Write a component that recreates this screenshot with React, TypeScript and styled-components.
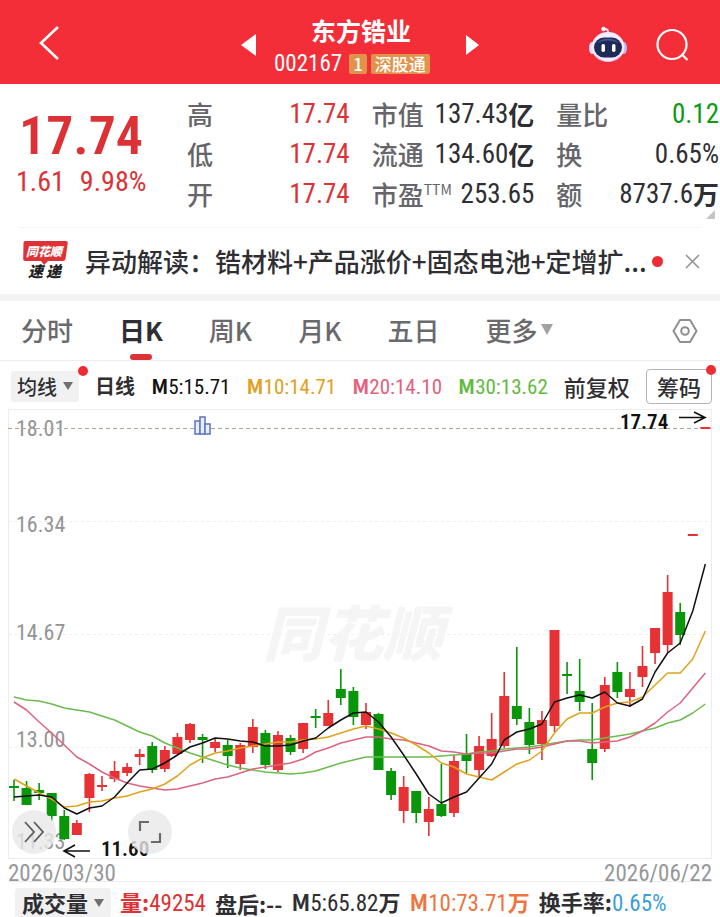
import React from "react";
import styled, { createGlobalStyle } from "styled-components";

const CJK = '"Noto Sans CJK SC", sans-serif';
const NUM = '"Roboto Condensed", "Liberation Sans Narrow", Roboto, "Noto Sans CJK SC", sans-serif';

const RED = "#dc3236";
const INK = "#2f2f33";

const GlobalStyle = createGlobalStyle`
  *, *::before, *::after { box-sizing: border-box; }
  body { margin: 0; background: #fff; color: ${INK}; font-family: ${CJK}; }
  button { border: 0; padding: 0; background: none; font: inherit; color: inherit; cursor: pointer; }
  h1, p, dl, dt, dd { margin: 0; font-weight: inherit; }
  svg { display: block; }
`;

const Page = styled.main`
  min-height: 100vh;
  overflow: hidden;
  background: #fff;
`;

const Num = styled.span<{ $size?: number; $weight?: number }>`
  font-family: ${NUM};
  font-size: ${(p) => (p.$size ? `${p.$size}px` : "inherit")};
  font-weight: ${(p) => p.$weight ?? 400};
`;

/* ---------- header ---------- */

const Header = styled.header`
  display: grid;
  grid-template-columns: 1fr auto 1fr;
  align-items: center;
  height: 84px;
  padding: 6px 30px 0;
  background: #f42e38;
  color: #fff;
`;

const BackButton = styled.button`
  margin-left: 8px;
`;

const Switcher = styled.div`
  display: flex;
  align-items: center;
  gap: 18px;
`;

const StockInfo = styled.div`
  min-width: 174px;
`;

const StockName = styled.h1`
  font-size: 25px;
  line-height: 38px;
  font-weight: 700;
  text-align: center;
`;

const CodeLine = styled.div`
  display: flex;
  align-items: center;
  gap: 4px;
  height: 30px;
`;

const Code = styled(Num)`
  margin-right: 3px;
  line-height: 30px;
`;

const Tag = styled.span`
  height: 20px;
  padding: 0 4px;
  border-radius: 2px;
  background: #e2934a;
  font-size: 17px;
  line-height: 20px;
  font-weight: 500;
`;

const HeaderActions = styled.div`
  display: flex;
  align-items: center;
  justify-content: flex-end;
  gap: 28px;
`;

/* ---------- quote ---------- */

const Quote = styled.section`
  position: relative;
  display: grid;
  grid-template-columns: 187px 1fr;
  height: 143px;
  padding: 10px 1px 0 0;
`;

const PriceBlock = styled.div`
  padding: 12px 0 0 16px;
  color: ${RED};
`;

const Price = styled(Num)`
  display: block;
  padding-left: 3px;
  line-height: 60px;
`;

const Change = styled(Num)`
  display: flex;
  gap: 15px;
  line-height: 32px;
`;

const Stats = styled.dl`
  display: grid;
  grid-template-columns: repeat(3, 1fr);
  grid-auto-flow: column;
  grid-template-rows: repeat(3, 40px);
  column-gap: 22px;
`;

const Stat = styled.div`
  display: flex;
  justify-content: space-between;
  align-items: center;
  white-space: nowrap;
`;

const StatLabel = styled.dt`
  display: flex;
  font-size: 26px;
  line-height: 40px;
  font-weight: 500;
  color: #66666a;
`;

const Sup = styled.sup`
  font-family: ${CJK};
  font-size: 14px;
  line-height: 30px;
  font-weight: 400;
`;

const StatValue = styled.dd<{ $color?: string }>`
  display: flex;
  align-items: center;
  font-size: 26px;
  line-height: 40px;
  font-weight: 700;
  color: ${(p) => p.$color ?? INK};
`;

const Corner = styled.span`
  position: absolute;
  right: 5px;
  bottom: 8px;
  border: solid transparent;
  border-width: 0 0 9px 9px;
  border-bottom-color: #c4c4c6;
`;

/* ---------- news ---------- */

const News = styled.section`
  display: flex;
  align-items: center;
  height: 67px;
  margin: 0 20px;
  border-top: 1px solid #f3f3f3;
`;

const NewsLink = styled.a`
  display: flex;
  align-items: center;
  flex: 1;
  min-width: 0;
  gap: 17px;
  color: ${INK};
  text-decoration: none;
`;

const Headline = styled.span`
  overflow: hidden;
  font-size: 26px;
  line-height: 40px;
  font-weight: 500;
  white-space: nowrap;
`;

const Dot = styled.i<{ $size: number }>`
  flex: none;
  width: ${(p) => p.$size}px;
  height: ${(p) => p.$size}px;
  border-radius: 50%;
  background: #ee2c35;
`;

const NewsDot = styled(Dot)`
  margin: 0 22px 0 4px;
`;

const CornerDot = styled(Dot)<{ $out?: number }>`
  position: absolute;
  top: -5px;
  right: ${(p) => -(p.$out ?? 5)}px;
`;

const Band = styled.div`
  height: 7px;
  background: #f3f3f4;
`;

/* ---------- tabs ---------- */

const Tabs = styled.nav`
  display: flex;
  align-items: stretch;
  gap: 46px;
  height: 60px;
  padding: 0 22px 0 21px;
  border-bottom: 1px solid #ececec;
`;

const Tab = styled.button<{ $active?: boolean }>`
  position: relative;
  display: flex;
  align-items: center;
  gap: 4px;
  padding-bottom: 2px;
  font-size: 26px;
  font-weight: ${(p) => (p.$active ? 700 : 500)};
  color: ${(p) => (p.$active ? INK : "#6a6a6d")};
  white-space: nowrap;

  &::after {
    content: "";
    display: ${(p) => (p.$active ? "block" : "none")};
    position: absolute;
    left: 50%;
    bottom: 0;
    width: 22px;
    height: 6px;
    margin-left: -11px;
    border-radius: 3px;
    background: ${RED};
  }
`;

const SettingsButton = styled.button`
  margin-left: auto;
`;

/* ---------- indicator rows ---------- */

const MaRow = styled.div`
  display: flex;
  align-items: center;
  justify-content: space-between;
  height: 48px;
  padding: 2px 8px 0 11px;
  white-space: nowrap;
`;

const Picker = styled.button`
  position: relative;
  display: flex;
  align-items: center;
  gap: 6px;
  height: 31px;
  padding: 0 6px;
  border-radius: 3px;
  background: #f1f1f2;
  font-size: 20px;
  font-weight: 500;
  line-height: 31px;
  color: ${INK};
`;

const VolumePicker = styled(Picker)`
  height: 30px;
  padding: 0 7px;
  font-size: 22px;
  font-weight: 700;
`;

const Item = styled.span<{ $color?: string; $size?: number; $weight?: number }>`
  font-size: ${(p) => p.$size ?? 20}px;
  line-height: 28px;
  font-weight: ${(p) => p.$weight ?? 700};
  color: ${(p) => p.$color ?? INK};
`;

const ChipButton = styled.button`
  position: relative;
  height: 35px;
  padding: 0 10px;
  border: 1px solid #b4b4b6;
  border-radius: 4px;
  font-size: 22px;
  line-height: 33px;
  font-weight: 500;
`;

const VolumeRow = styled.div`
  display: flex;
  align-items: center;
  gap: 9px;
  height: 36px;
  margin: 0 8px;
  padding: 6px 7px 0;
  border-top: 1px solid #ececf0;
  white-space: nowrap;
`;

/* ---------- chart ---------- */

const ChartBox = styled.div`
  position: relative;
  margin: 0 8px;
`;

const ChartSvg = styled.svg`
  width: 100%;
  height: auto;
`;

const FloatButton = styled.button<{ $left: number }>`
  position: absolute;
  left: ${(p) => p.$left}px;
  bottom: 5px;
  display: grid;
  place-items: center;
  width: 44px;
  height: 44px;
  border-radius: 50%;
  background: rgba(232, 232, 232, 0.8);
`;

const Dates = styled.div`
  display: flex;
  justify-content: space-between;
  height: 22px;
  margin: 0 8px;
  line-height: 30px;
  color: #97979a;
`;

type Candle = [up: 0 | 1, high: number, top: number, bottom: number, low: number];

const candles: Candle[] = [
  [0, 780, 786, 788, 801], [0, 781, 788, 805, 805], [0, 783, 790, 793, 800], [0, 793, 793, 816, 821],
  [0, 810, 816, 839, 840], [1, 820, 823, 835, 835], [1, 773, 774, 798, 812], [1, 776, 785, 787, 791],
  [1, 761, 771, 779, 782], [1, 763, 767, 773, 776], [1, 749, 754, 757, 765], [0, 742, 746, 770, 773],
  [1, 746, 750, 769, 772], [1, 733, 737, 754, 754], [1, 723, 724, 740, 743], [0, 734, 737, 740, 763],
  [1, 739, 742, 748, 752], [0, 740, 745, 756, 768], [1, 743, 745, 764, 770], [1, 719, 727, 747, 753],
  [0, 730, 733, 765, 769], [1, 731, 735, 770, 772], [0, 735, 738, 752, 755], [1, 723, 723, 749, 753],
  [0, 709, 716, 718, 728], [1, 700, 713, 726, 726], [0, 669, 689, 698, 705], [0, 687, 691, 717, 725],
  [1, 703, 712, 725, 729], [0, 713, 714, 770, 770], [0, 768, 771, 795, 800], [1, 776, 787, 811, 823],
  [0, 791, 791, 813, 823], [1, 797, 809, 822, 836], [0, 764, 804, 816, 817], [1, 755, 761, 813, 817],
  [0, 734, 754, 761, 773], [1, 736, 746, 770, 777], [1, 713, 739, 756, 757], [1, 672, 696, 746, 748],
  [0, 647, 706, 719, 725], [0, 708, 722, 745, 754], [1, 711, 720, 744, 760], [1, 630, 630, 726, 732],
  [0, 662, 674, 676, 694], [0, 659, 691, 702, 711], [0, 703, 749, 763, 780], [1, 677, 685, 749, 752],
  [0, 662, 672, 692, 698], [1, 672, 689, 697, 707], [1, 646, 666, 677, 687], [1, 628, 628, 653, 664],
  [1, 575, 592, 645, 653], [0, 603, 612, 635, 645], [1, 534, 534, 536, 536], [1, 427, 427, 429, 429],
];

const averages: { color: string; ys: number[] }[] = [
  {
    color: "#6cbb4e",
    ys: [697, 700, 701, 704, 708, 710, 712, 716, 720, 726, 732, 736, 743, 748, 753, 757, 761, 765, 768, 770, 772, 773, 774, 773, 771, 767, 763, 760, 757, 757, 757, 757, 757, 757, 756, 755, 754, 752, 751, 749, 748, 747, 745, 743, 741, 740, 740, 738, 736, 734, 731, 728, 723, 720, 713, 704],
  },
  {
    color: "#dd6480",
    ys: [702, 710, 722, 733, 745, 757, 764, 772, 778, 783, 786, 788, 790, 789, 786, 783, 779, 777, 773, 769, 767, 765, 763, 759, 752, 748, 743, 740, 737, 737, 739, 740, 743, 746, 751, 752, 754, 753, 753, 751, 749, 749, 747, 744, 741, 741, 743, 742, 741, 737, 731, 723, 712, 703, 688, 673],
  },
  {
    color: "#e0a21c",
    ys: [779, 786, 793, 799, 807, 806, 802, 801, 798, 796, 792, 789, 784, 776, 765, 758, 753, 751, 748, 746, 744, 742, 742, 740, 739, 737, 733, 729, 726, 729, 733, 738, 745, 753, 763, 767, 774, 777, 780, 772, 764, 760, 751, 733, 719, 713, 713, 707, 703, 702, 697, 685, 673, 673, 659, 631],
  },
  {
    color: "#111",
    ys: [797, 796, 795, 797, 808, 814, 808, 806, 797, 783, 770, 769, 763, 755, 747, 743, 738, 739, 741, 742, 746, 746, 745, 741, 738, 728, 720, 713, 712, 722, 737, 755, 774, 794, 803, 797, 792, 778, 764, 740, 732, 729, 724, 702, 698, 695, 698, 692, 703, 706, 699, 672, 653, 643, 611, 564],
  },
];

const FIRST_X = 14;
const STEP = 12.57;
const xAt = (i: number) => FIRST_X + i * STEP;

const axis = [
  { label: "18.01", y: 436 },
  { label: "16.34", y: 532 },
  { label: "14.67", y: 640 },
  { label: "13.00", y: 747 },
  { label: "11.33", y: 849 },
];

function CandleChart() {
  return (
    <ChartSvg viewBox="8 409 704 450" role="img" aria-label="日K">
      <g fill="none" stroke="#ececf0" strokeWidth="1">
        <rect x="8.5" y="409.5" width="703" height="449" />
        {[521, 634, 747].map((y) => (
          <path key={y} d={`M9 ${y}.5H711`} strokeDasharray="3 3" stroke="#eeeeee" />
        ))}
      </g>
      <text
        x="263" y="656" fontFamily={CJK} fontSize="60" fontWeight="900" fontStyle="italic" fill="#f5f5f5"
      >
        同花顺
      </text>
      <g fontFamily={NUM} fontSize="22" fill="#949497">
        {axis.map((a) => (
          <text key={a.label} x="16" y={a.y}>{a.label}</text>
        ))}
      </g>
      <path d="M8 428.5H711" stroke="#a9a98c" strokeWidth="1" strokeDasharray="4 3" />
      {candles.map(([up, high, top, bottom, low], i) => {
        const x = xAt(i);
        const color = up ? "#e63234" : "#0a960a";
        return (
          <g key={i} fill={color}>
            <rect x={x - 0.8} y={high} width="1.6" height={low - high} />
            <rect x={x - 5} y={top} width="10" height={bottom - top} />
          </g>
        );
      })}
      {averages.map((line) => (
        <polyline
          key={line.color}
          fill="none"
          stroke={line.color}
          strokeWidth="1.5"
          strokeLinejoin="round"
          points={line.ys.map((y, i) => `${xAt(i)},${y}`).join(" ")}
        />
      ))}
      <g fill="#e8edff" stroke="#6478c8" strokeWidth="1.6">
        <rect x="195" y="421" width="5" height="13" />
        <rect x="200" y="417" width="5" height="17" />
        <rect x="205" y="424" width="5" height="10" />
      </g>
      <g fontFamily={NUM} fontWeight="600" fontSize="21" fill="#111">
        <text x="620" y="429">17.74</text>
        <text x="101" y="856">11.60</text>
      </g>
      <g fill="none" stroke="#111" strokeWidth="1.6">
        <path d="M679 417.5H705M694 412L705 417.5L694 423" />
        <path d="M90 851H64M75 845L64 851L75 857" />
      </g>
    </ChartSvg>
  );
}

/* ---------- small drawings ---------- */

const Caret = ({ color = "#6f6f72", w = 10, h = 8 }: { color?: string; w?: number; h?: number }) => (
  <svg width={w} height={h} viewBox="0 0 10 8" preserveAspectRatio="none" aria-hidden>
    <path d="M0 0H10L5 8Z" fill={color} />
  </svg>
);

const Robot = () => (
  <svg width="40" height="38" viewBox="0 0 40 38" aria-hidden>
    <path d="M20 9V5.500Q20 3 15.500 2.800" fill="none" stroke="#f3dff2" strokeWidth="2" />
    <circle cx="15.500" cy="3" r="2.200" fill="#fff" />
    <ellipse cx="4" cy="22" rx="3" ry="6" fill="#e6ddfb" />
    <ellipse cx="36" cy="22" rx="3" ry="6" fill="#c9b4f2" />
    <ellipse cx="20" cy="21" rx="16.500" ry="15" fill="#f1ecff" />
    <path d="M7 29Q20 42 33 29Q28 36 20 36Q12 36 7 29Z" fill="#b9a0ec" />
    <rect x="6" y="11.500" width="28" height="20" rx="10" fill="#1f2b57" />
    <path d="M9 17Q13 12.500 20 12.500Q27 12.500 31 17Q26 14.500 20 14.500Q14 14.500 9 17Z" fill="#43538c" />
    <rect x="13.500" y="18" width="3.500" height="8" rx="1.700" fill="#fff" />
    <rect x="24" y="18" width="3.500" height="8" rx="1.700" fill="#fff" />
  </svg>
);

const NewsLogo = () => (
  <svg width="48" height="44" viewBox="0 0 48 44" role="img" aria-label="同花顺速递">
    <path d="M5 2H46Q48 2 47.700 4L45.500 20Q45 22 43 22H28L24 26L21 22H5Q3 22 3.200 20L3.500 4Q3.500 2 5 2Z" fill="#de3237" />
    <g fontFamily={CJK} fontWeight="900" fontStyle="italic">
      <text x="6" y="16.500" fontSize="12" fill="#fff">同花顺</text>
      <text x="8" y="38" fontSize="15" fill="#222">速</text>
      <text x="26" y="38" fontSize="15" fill="#222">递</text>
    </g>
  </svg>
);

/* ---------- data ---------- */

type StatData = { label: string; sup?: string; value: string; unit?: string; color?: string };

const stats: StatData[] = [
  { label: "高", value: "17.74", color: RED },
  { label: "低", value: "17.74", color: RED },
  { label: "开", value: "17.74", color: RED },
  { label: "市值", value: "137.43", unit: "亿" },
  { label: "流通", value: "134.60", unit: "亿" },
  { label: "市盈", sup: "TTM", value: "253.65" },
  { label: "量比", value: "0.12", color: "#0b9a12" },
  { label: "换", value: "0.65%" },
  { label: "额", value: "8737.6", unit: "万" },
];

const maItems = [
  { value: "5:15.71", color: "#111" },
  { value: "10:14.71", color: "#e0a01e" },
  { value: "20:14.10", color: "#e4607c" },
  { value: "30:13.62", color: "#64b93f" },
];

export default function App() {
  return (
    <Page>
      <GlobalStyle />
      <Header>
        <div>
          <BackButton aria-label="返回">
            <svg width="22" height="36" viewBox="0 0 22 36" aria-hidden>
              <path d="M20 2L3 18L20 34" fill="none" stroke="#fff" strokeWidth="2.600" />
            </svg>
          </BackButton>
        </div>
        <Switcher>
          <button aria-label="上一只">
            <svg width="15" height="22" viewBox="0 0 15 22" aria-hidden><path d="M15 0V22L0 11Z" fill="#fff" /></svg>
          </button>
          <StockInfo>
            <StockName>东方锆业</StockName>
            <CodeLine>
              <Code $size={23}>002167</Code>
              <Tag>1</Tag>
              <Tag>深股通</Tag>
            </CodeLine>
          </StockInfo>
          <button aria-label="下一只">
            <svg width="13" height="20" viewBox="0 0 13 20" aria-hidden><path d="M0 0V20L13 10Z" fill="#fff" /></svg>
          </button>
        </Switcher>
        <HeaderActions>
          <button aria-label="智能助手"><Robot /></button>
          <button aria-label="搜索">
            <svg width="34" height="34" viewBox="0 0 34 34" fill="none" stroke="#fff" strokeWidth="2.200" aria-hidden>
              <circle cx="16" cy="16.500" r="14.500" />
              <path d="M26 26.500L31.500 32" />
            </svg>
          </button>
        </HeaderActions>
      </Header>

      <Quote>
        <PriceBlock>
          <Price $size={54} $weight={600}>17.74</Price>
          <Change $size={28}>
            <span>1.61</span>
            <span>9.98%</span>
          </Change>
        </PriceBlock>
        <Stats>
          {stats.map((s) => (
            <Stat key={s.label}>
              <StatLabel>
                {s.label}
                {s.sup && <Sup>{s.sup}</Sup>}
              </StatLabel>
              <StatValue $color={s.color}>
                <Num $size={27}>{s.value}</Num>
                {s.unit}
              </StatValue>
            </Stat>
          ))}
        </Stats>
        <Corner />
      </Quote>

      <News>
        <NewsLink href="#news">
          <NewsLogo />
          <Headline>异动解读：锆材料+产品涨价+固态电池+定增扩...</Headline>
        </NewsLink>
        <NewsDot $size={11} />
        <button aria-label="关闭">
          <svg width="15" height="15" viewBox="0 0 15 15" aria-hidden>
            <path d="M1 1L14 14M14 1L1 14" stroke="#8f8f92" strokeWidth="1.500" />
          </svg>
        </button>
      </News>
      <Band />

      <Tabs>
        <Tab>分时</Tab>
        <Tab $active>日K</Tab>
        <Tab>周K</Tab>
        <Tab>月K</Tab>
        <Tab>五日</Tab>
        <Tab>更多<Caret color="#a2a2a4" w={12} h={11} /></Tab>
        <SettingsButton aria-label="设置">
          <svg width="26" height="26" viewBox="0 0 26 26" fill="none" stroke="#8f8f92" strokeWidth="2" aria-hidden>
            <path d="M8 2H18L24.500 13L18 24H8L1.500 13Z" strokeLinejoin="round" />
            <circle cx="13" cy="13" r="3.800" />
          </svg>
        </SettingsButton>
      </Tabs>

      <MaRow>
        <Picker>均线<Caret /><CornerDot $size={10} $out={9} /></Picker>
        <Item>日线</Item>
        {maItems.map((m) => (
          <Item key={m.value} $color={m.color}>M<Num $size={21}>{m.value}</Num></Item>
        ))}
        <Item $size={22} $weight={500}>前复权</Item>
        <ChipButton>筹码<CornerDot $size={10} /></ChipButton>
      </MaRow>

      <ChartBox>
        <CandleChart />
        <FloatButton $left={4} aria-label="展开">
          <svg width="22" height="22" viewBox="0 0 22 22" fill="none" stroke="#5c5c5e" strokeWidth="1.800" aria-hidden>
            <path d="M2 1L11 11L2 21M11 1L20 11L11 21" />
          </svg>
        </FloatButton>
        <FloatButton $left={120} aria-label="全屏">
          <svg width="24" height="24" viewBox="0 0 24 24" fill="none" stroke="#6a6a6c" strokeWidth="2.200" aria-hidden>
            <path d="M2 11V2H11M22 13V22H13" />
          </svg>
        </FloatButton>
      </ChartBox>
      <Dates>
        <Num $size={23}>2026/03/30</Num>
        <Num $size={23}>2026/06/22</Num>
      </Dates>

      <VolumeRow>
        <VolumePicker>成交量<Caret /></VolumePicker>
        <Item $size={22} $color={RED}>量:<Num $size={23}>49254</Num></Item>
        <Item $size={22}>盘后:--</Item>
        <Item $size={22}>M<Num $size={23}>5:65.82</Num>万</Item>
        <Item $size={22} $color="#ee7440">M<Num $size={23}>10:73.71</Num>万</Item>
        <Item $size={22} $color="#3d9edb"><Ink>换手率:</Ink><Num $size={23}>0.65%</Num></Item>
      </VolumeRow>
    </Page>
  );
}

const Ink = styled.span`
  color: ${INK};
`;
